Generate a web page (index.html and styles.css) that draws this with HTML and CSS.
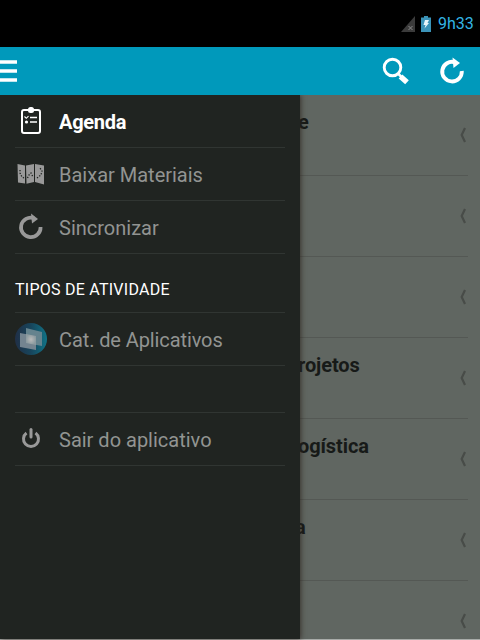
FILE: index.html
```
<!DOCTYPE html>
<html lang="pt-BR">

<head>
    <meta charset="UTF-8">
    <title>Agenda</title>
    <link rel="stylesheet" href="styles.css">
</head>

<body>
    <div class="status-bar">
        <svg class="signal" width="14" height="16" viewBox="0 0 14 16">
            <path d="M14 0V16H0z" fill="#3b3b3b" />
            <path d="M7.500 10l4 4M11.500 10l-4 4" stroke="#8a8a8a" stroke-width="1" />
        </svg>
        <svg class="battery" width="10" height="16" viewBox="0 0 10 16">
            <path d="M0 1.500h3V0h4v1.500h3V16H0z" fill="#3b93b8" />
            <path d="M4 4h4L6.500 7H8L3.500 12.500 4.500 9H2.500z" fill="#e8f6fb" />
        </svg>
        <span class="clock">9h33</span>
    </div>

    <header class="app-bar">
        <svg class="menu-icon" width="17" height="24" viewBox="0 0 17 24">
            <path d="M0 3h17M0 12h17M0 21h17" stroke="#fff" stroke-width="3.700" />
        </svg>
        <svg class="search-icon" width="28" height="28" viewBox="0 0 28 28" fill="none" stroke="#fff">
            <circle cx="10.500" cy="10.500" r="8.300" stroke-width="2.900" />
            <path d="M16 16.500l4 4" stroke-width="2.500" />
            <path d="M18.500 19.500l6.500 5.700" stroke-width="5.500" />
        </svg>
        <svg class="sync-icon" width="24" height="26" viewBox="0 0 24 26">
            <path d="M15 4.300A9.800 9.800 0 1 0 21.800 13" fill="none" stroke="#fff" stroke-width="3.900" />
            <path d="M12.500 -.5l7.500 5.500-6.500 5z" fill="#fff" />
        </svg>
    </header>

    <main class="content">
        <nav class="drawer">
            <a class="item active">
                <svg width="32" height="32" viewBox="0 0 32 32" fill="none" stroke="#fff">
                    <rect x="7" y="5" width="18" height="23" rx="2" stroke-width="2" />
                    <rect x="13" y="2" width="6" height="6" rx="2.500" fill="#fff" stroke="none" />
                    <path d="M15 12.500h7M15 17h7" stroke-width="1.500" />
                    <path d="M9.500 11.500l1.800 1.800 2.200-2.200" stroke-width="1.100" />
                    <circle cx="11.500" cy="17" r="1.600" fill="#fff" stroke="none" />
                </svg>
                <span>Agenda</span>
            </a>
            <a class="item">
                <svg width="32" height="32" viewBox="0 0 32 32">
                    <path d="M2.500 6l7.500 1.500v18L3 24.500zM11 7.500l8-1.500v18l-7.500 1.800zM20 6l9 1.500v19L20 24z" fill="#999" />
                    <path d="M5 12v3l2 4 2 1M12.500 20l1.500-3 2-2 2 4M22 20l4-3 1-4-2-3" fill="none" stroke="#202421" stroke-width="1.300" stroke-dasharray="1.300 1.500" />
                </svg>
                <span>Baixar Materiais</span>
            </a>
            <a class="item">
                <svg width="32" height="32" viewBox="0 0 32 32">
                    <path d="M19 7.100A9.800 9.800 0 1 0 25.600 16" fill="none" stroke="#999" stroke-width="3.700" />
                    <path d="M16 2.500l7 5.500-6 4.500z" fill="#999" />
                </svg>
                <span>Sincronizar</span>
            </a>
            <h2 class="section-title">TIPOS DE ATIVIDADE</h2>
            <a class="item category">
                <svg width="32" height="32" viewBox="0 0 32 32">
                    <defs>
                        <linearGradient id="globe">
                            <stop offset="0" stop-color="#202f46" />
                            <stop offset=".5" stop-color="#17455c" />
                            <stop offset="1" stop-color="#117386" />
                        </linearGradient>
                        <radialGradient id="glow">
                            <stop offset="0" stop-color="#bababa" />
                            <stop offset="1" stop-color="#8b9a9f" />
                        </radialGradient>
                    </defs>
                    <circle cx="16" cy="16" r="16" fill="url(#globe)" />
                    <path d="M11 5l16 4v14l-16-3z" fill="#65838e" />
                    <path d="M5 10l16 3v14L5 24z" fill="#748490" />
                    <path d="M11 11l10 2v9l-10-2z" fill="url(#glow)" />
                </svg>
                <span>Cat. de Aplicativos</span>
            </a>
            <a class="item exit">
                <svg width="32" height="32" viewBox="0 0 32 32" fill="none" stroke="#999">
                    <path d="M11.500 10A7.500 7.500 0 1 0 20.500 10" stroke-width="3" />
                    <path d="M16 6.500v7.500" stroke-width="3" stroke-linecap="round" />
                </svg>
                <span>Sair do aplicativo</span>
            </a>
        </nav>

        <ul class="activities">
            <li><b>e</b><svg class="chevron" viewBox="0 0 7 16"><path d="M5 1L1.700 8 5 15" /></svg></li>
            <li><svg class="chevron" viewBox="0 0 7 16"><path d="M5 1L1.700 8 5 15" /></svg></li>
            <li><svg class="chevron" viewBox="0 0 7 16"><path d="M5 1L1.700 8 5 15" /></svg></li>
            <li><b>rojetos</b><svg class="chevron" viewBox="0 0 7 16"><path d="M5 1L1.700 8 5 15" /></svg></li>
            <li><b>ogística</b><svg class="chevron" viewBox="0 0 7 16"><path d="M5 1L1.700 8 5 15" /></svg></li>
            <li class="tucked"><b>a</b><svg class="chevron" viewBox="0 0 7 16"><path d="M5 1L1.700 8 5 15" /></svg></li>
            <li><svg class="chevron" viewBox="0 0 7 16"><path d="M5 1L1.700 8 5 15" /></svg></li>
        </ul>
    </main>
</body>

</html>
```
FILE: styles.css
```
* {
    box-sizing: border-box;
}

body {
    margin: 0;
    width: 480px;
    height: 640px;
    overflow: hidden;
    display: flex;
    flex-direction: column;
    font-family: Roboto, sans-serif;
    background: #606661;
}

.status-bar {
    height: 47px;
    flex: none;
    background: #000;
    display: flex;
    align-items: center;
    justify-content: flex-end;
    padding-right: 6px;
}

.signal {
    margin-right: 6px;
}

.battery {
    margin-right: 7px;
}

.clock {
    color: #33b5e5;
    font-size: 16px;
    width: 36px;
    white-space: nowrap;
}

.app-bar {
    height: 48px;
    flex: none;
    background: #0099bb;
    display: flex;
    align-items: center;
    padding-right: 16px;
    position: relative;
    z-index: 2;
}

.search-icon {
    margin-left: auto;
    margin-right: 30px;
}

.sync-icon {
    overflow: visible;
}

.content {
    flex: 1;
    min-height: 0;
    display: flex;
    border-bottom: 1px solid #a9aca9;
}

/* side menu */
.drawer {
    width: 300px;
    flex: none;
    padding: 0 15px;
    background: #202421;
    box-shadow: 1px 0 5px rgba(45, 35, 30, .75);
    position: relative;
    z-index: 1;
}

.item {
    height: 53px;
    display: flex;
    align-items: center;
    gap: 12px;
    border-bottom: 1px solid #303532;
    color: #929492;
    font-size: 20px;
    white-space: nowrap;
}

.item svg {
    flex: none;
}

.item span {
    padding-top: 2px;
}

.item.active {
    color: #fff;
    font-weight: bold;
    letter-spacing: -.3px;
}

.category {
    letter-spacing: -.1px;
}

.section-title {
    height: 59px;
    margin: 0;
    padding-top: 12px;
    line-height: 47px;
    border-bottom: 1px solid #303532;
    color: #fff;
    font-size: 16px;
    font-weight: normal;
    letter-spacing: .25px;
}

.exit {
    height: 54px;
    margin-top: 46px;
    border-top: 1px solid #303532;
}

/* list behind the menu */
.activities {
    flex: 1;
    min-width: 0;
    margin: 0;
    padding: 0 12px 0 0;
    list-style: none;
}

.activities li {
    height: 81px;
    display: flex;
    border-bottom: 1px solid #545854;
}

.activities b {
    margin-left: -2px;
    color: #171a18;
    font-size: 20px;
    line-height: 24px;
    letter-spacing: -.1px;
    padding-top: 15px;
}

.activities .tucked b {
    margin-left: -5px;
}

.chevron {
    width: 7px;
    height: 16px;
    margin: 32px 1px 0 auto;
    fill: none;
    stroke: #484c48;
    stroke-width: 2.2;
}
```
